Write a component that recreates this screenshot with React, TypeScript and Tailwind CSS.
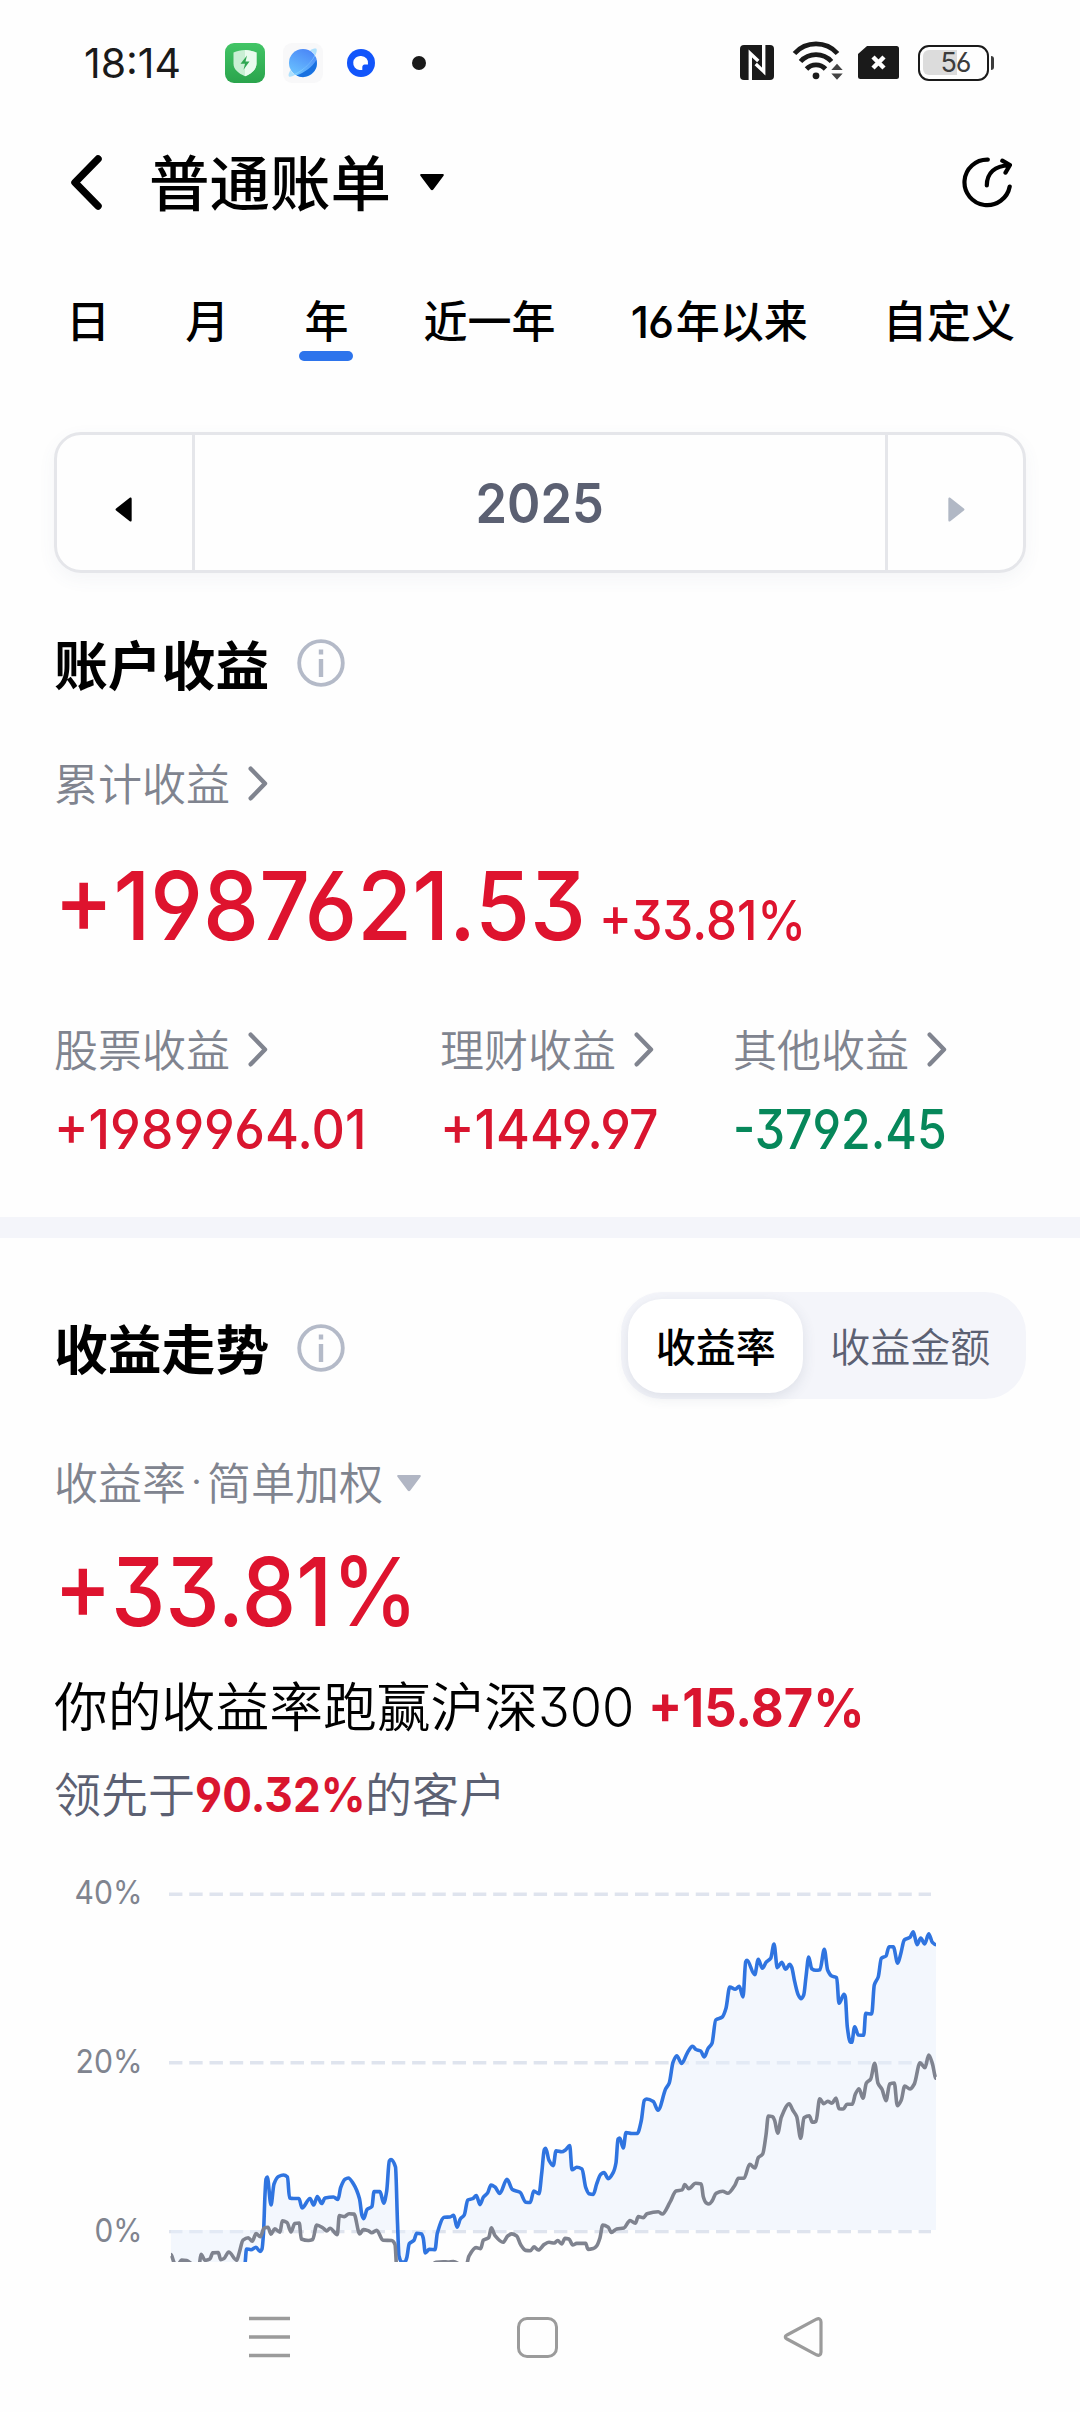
import { ReactNode } from "react";
import clsx from "clsx";

type Point = [number, number];

const tabs = ["日", "月", "年", "近一年", "16年以来", "自定义"];

const breakdown = [
  { label: "股票收益", value: "+1989964.01", color: "text-[#d9152f]", width: "w-[386px]", scale: "scale-x-[0.942]" },
  { label: "理财收益", value: "+1449.97", color: "text-[#d9152f]", width: "w-[293px]", scale: "scale-x-[0.94]" },
  { label: "其他收益", value: "-3792.45", color: "text-[#06875a]", width: "w-[240px]", scale: "scale-x-[0.875]" },
];

const accountLine: Point[] = [
  [171, 430], [236, 430], [245, 404], [246.5, 389], [251, 389.7], [256, 387.3], [260, 391.5], [262, 389], [263.5, 373], [265, 334.5],
  [266, 319], [267.3, 317], [271, 345], [274, 324], [278.5, 316.5], [283.5, 315], [287.5, 317], [289.5, 338], [293.5, 338.5],
  [299, 338.5], [302, 348], [310, 338.5], [313.7, 345], [317.3, 336.5], [321.7, 343.5], [325, 338], [333.5, 337], [338, 339.5],
  [340.7, 327.5], [345, 319.3], [348.3, 318], [353.5, 324], [359.5, 338.7], [362, 355.5], [363.7, 358.7], [367, 349.6],
  [372, 346.4], [374, 331.6], [380, 331.6], [383.7, 343.2], [386.7, 331], [389.3, 301], [391, 299.6], [395.5, 307],
  [397.5, 362.6], [399, 396], [401.7, 402], [405, 402], [406.7, 398], [409.3, 383.7], [414, 380.2], [416.7, 373.2],
  [421.7, 373.9], [423.3, 378.4], [425.3, 392.9], [429.3, 389.4], [435, 389.7], [437.3, 373.2], [444.3, 357.3], [450, 357],
  [453.7, 355.2], [457, 367.2], [460.3, 359], [464.3, 354.9], [467.7, 340], [472.7, 338.7], [476.3, 335.5], [480, 344.6],
  [483.3, 337.3], [487.7, 332.7], [491, 325], [495, 327], [499.7, 333.4], [507, 319.3], [512.3, 329.5], [520, 332.3],
  [525.7, 342.2], [530.3, 342.5], [533.7, 331], [539, 333.7], [541.7, 313.3], [544.3, 289.7], [545.7, 288.3], [549, 300.3],
  [553.3, 305.6], [556, 290.8], [561.7, 291.8], [565.7, 289.7], [569.7, 285.5], [572, 309.8], [576.7, 307.3], [582, 309],
  [585.7, 327.4], [589, 333.7], [593.3, 334.4], [596.7, 323.9], [600.7, 314.4], [604, 312.6], [608.3, 318.6], [613.3, 312.3],
  [616, 302.7], [618, 279.2], [619.7, 278], [623.3, 288], [626, 272.5], [631.7, 273.5], [637.3, 273.5], [641.3, 260.5],
  [644.3, 240.4], [646.7, 239], [653.3, 241.5], [658, 250.3], [665.7, 228.8], [669.3, 222.8], [673, 202.4], [676.7, 195.7],
  [681.7, 203.5], [687.3, 192.9], [692.5, 186.2], [696, 189.5], [700.7, 191], [704.3, 197], [708, 188.7], [712, 183.3],
  [715.7, 160], [722.3, 157], [726, 148.3], [729.7, 127], [735.3, 129.3], [739.3, 126.3], [743, 137], [745.7, 101.7],
  [747, 100.3], [754.7, 114.7], [758.3, 99.3], [762.3, 108.3], [766.3, 102], [770.7, 98.3], [774, 84], [777.3, 107.7],
  [781.7, 102.3], [785.7, 109.3], [789.7, 104.3], [791.7, 107.3], [794.7, 121.7], [798.3, 135], [801, 138.7], [803.7, 135],
  [806, 116.7], [808.7, 97], [811.7, 108.7], [815.7, 110.3], [820, 109.7], [824.3, 89.3], [827.7, 110.3], [831.7, 116],
  [836.7, 117.7], [839, 143.3], [844, 134.3], [845.3, 136.7], [847.3, 166.7], [850.3, 182.3], [851.7, 182.3], [854.7, 166.7],
  [858.3, 175], [863.7, 175.3], [865.7, 153.3], [871.7, 154], [874.3, 125], [878.3, 116.7], [881.3, 98.3], [886, 96],
  [889, 86.7], [893.3, 86.7], [897.7, 103.3], [900.7, 94], [904.3, 80], [910, 77.3], [913.3, 71.7], [917, 84.7],
  [920.7, 78], [924.7, 84], [928.7, 73.7], [932.3, 82.3], [936, 84.7],
];

const indexLine: Point[] = [
  [171, 394.6], [174, 402.4], [177, 406], [181.7, 400], [186.7, 400.6], [192, 404], [199, 406], [201, 394.3], [205, 400.3],
  [210, 398.9], [212.7, 392.9], [218.3, 392.5], [220.7, 399.6], [224, 398.5], [228.7, 392], [236.7, 400.3], [239.3, 392.5],
  [243, 380.2], [248.3, 377.7], [252.3, 381.3], [256, 373.5], [260.3, 376.7], [264, 368.2], [268, 367.2], [271, 374.2],
  [274.7, 368.9], [280, 372.1], [282.3, 360.8], [287, 362.6], [291, 372], [294.7, 363.6], [299.3, 363], [301.3, 379],
  [308.3, 380.5], [312.7, 379.5], [316.7, 365], [323.3, 368.2], [326.7, 371], [330, 368.2], [337.3, 374.6], [339.3, 355.6],
  [344.3, 356.6], [349, 353.8], [354, 354.1], [359.7, 373.9], [363.3, 369.6], [368.3, 370.7], [371.7, 372.8], [376.7, 370.3],
  [383, 380.2], [391.7, 380.5], [395, 384.4], [397, 412], [415, 425], [431, 406], [436, 402.2], [443.3, 401.8], [448, 402],
  [453.3, 401.5], [461, 405], [466, 406], [469, 396], [476, 387.6], [480.7, 388.6], [483.3, 380.2], [488.7, 377.7],
  [491.3, 367.9], [495, 375.6], [503, 382.3], [507.7, 376], [511.7, 373.9], [516.7, 376], [520.7, 384.8], [525.7, 390.4],
  [530.3, 390.8], [534, 386.9], [538.3, 390], [544.3, 384.4], [549, 382.3], [554.3, 383], [557.7, 380.5], [561.7, 384],
  [565, 378.4], [569, 379], [572.7, 385], [576.7, 383.4], [585.7, 383.4], [588, 389.4], [593.3, 388.6], [596.7, 385.8],
  [600, 377.7], [602.7, 365], [608.3, 367.2], [611.3, 372.5], [616.7, 368.9], [624, 367.9], [630, 360.5], [635.3, 363.3],
  [638.3, 356.6], [643.3, 357.7], [647, 353.8], [658.3, 351.7], [662.3, 354], [670, 342.2], [676, 331], [682.3, 329.9],
  [684.7, 324.5], [688.7, 328.7], [695.7, 323.3], [701.3, 324], [703.3, 336.7], [706, 342.7], [709, 344], [712.3, 340.7],
  [716, 333.3], [722.7, 331.3], [727.7, 333.3], [735, 325], [738.3, 318.3], [744, 318.3], [749.7, 304.3], [755, 308],
  [758.3, 297.7], [762.7, 294], [766, 275], [768.3, 256], [772.7, 256.7], [774.7, 260.7], [777.7, 273.3], [781.3, 257.3],
  [789.3, 243.7], [792.7, 250], [796.7, 256.7], [800.7, 278.3], [804, 257.7], [809.3, 255.7], [812.3, 262.3], [816, 261.3],
  [819.7, 238.7], [823.7, 243.7], [827.7, 241.3], [832, 243.3], [836, 238], [839, 248.7], [843.3, 249], [847, 244.3],
  [852.3, 244.3], [855.3, 234.3], [859, 228.7], [863, 238.3], [866.3, 223.3], [870.7, 219], [874.7, 203.3], [878, 223.3],
  [882, 229.3], [886, 240.7], [889.7, 224], [894.3, 223], [897.3, 245.7], [901.3, 240], [904.7, 226], [910, 229],
  [914.3, 224], [920, 202.7], [925, 207.7], [928.7, 195], [932.3, 203.3], [936, 218.3],
];

// Cubic interpolation that never overshoots a local peak
const smoothPath = (points: Point[]) => {
  const slope = (a: Point, b: Point) => (b[1] - a[1]) / (b[0] - a[0]);
  const tangents = points.map((p, i) => {
    if (i === 0 || i === points.length - 1) return 0;
    const s0 = slope(points[i - 1], p);
    const s1 = slope(p, points[i + 1]);
    return s0 * s1 <= 0 ? 0 : (2 * s0 * s1) / (s0 + s1);
  });
  return points.reduce((d, [x, y], i) => {
    if (i === 0) return `M${x} ${y}`;
    const [px, py] = points[i - 1];
    const h = (x - px) / 3;
    return `${d}C${px + h} ${py + tangents[i - 1] * h} ${x - h} ${y - tangents[i] * h} ${x} ${y}`;
  }, "");
};

// Figures with open six/nine and flat-top three, narrowed by the given scale class
const Num = ({ children, className, scale }: { children: ReactNode; className?: string; scale?: string }) => (
  <span className={clsx("inline-block whitespace-nowrap", className)}>
    <span className={clsx("inline-block origin-left font-[Inter,sans-serif] [font-feature-settings:'cv03','cv04','cv09']", scale)}>
      {children}
    </span>
  </span>
);

const ChevronRight = () => (
  <svg className="h-[35px] w-5" viewBox="0 0 20 35" fill="none" stroke="#80848f" strokeWidth="4.4" strokeLinecap="round" strokeLinejoin="round">
    <path d="M2.7 2.7 17 17.5 2.7 32.3" />
  </svg>
);

const CaretDown = ({ className }: { className?: string }) => (
  <svg className={clsx("h-[17px] w-6", className)} viewBox="0 0 24 17" fill="currentColor">
    <path d="M1.5 0h21c1.3 0 1.7 1 .9 2L13.3 15.5c-.8 1-1.8 1-2.6 0L.6 2C-.2 1 .2 0 1.5 0z" />
  </svg>
);

const InfoIcon = () => (
  <svg className="h-12 w-12" viewBox="0 0 48 48" fill="none" stroke="#b4bac8">
    <circle cx="24" cy="24" r="21.8" strokeWidth="3.8" />
    <path d="M24 10.5v5M24 20v18" strokeWidth="4.4" />
  </svg>
);

const StatusBar = () => (
  <div className="flex h-[125px] items-center pl-[84px] text-[#1a1a1a]">
    <Num className="w-[141px] text-[41px]">18:14</Num>
    <svg className="h-10 w-10" viewBox="0 0 40 40">
      <defs>
        <linearGradient id="guard" x1="0" y1="0" x2="0" y2="1">
          <stop offset="0" stopColor="#42c566" />
          <stop offset="1" stopColor="#2aa44c" />
        </linearGradient>
      </defs>
      <rect width="40" height="40" rx="9" fill="url(#guard)" />
      <path d="M20 7c4 .3 8 1.2 11.5 2.5V20.5c0 6-5 10-11.5 12.7C13.5 30.5 8.5 26.5 8.5 20.5V9.5C12 8.2 16 7.3 20 7z" fill="#c9efd4" />
      <path d="M20 7c4 .3 8 1.2 11.5 2.5V20.5c0 6-5 10-11.5 12.7z" fill="#e9fbee" />
      <path d="M22 12.5l-6.5 8.3H20l-1.5 6 6-8.3H20.5z" fill="#2ea751" />
    </svg>
    <svg className="ml-[18px] h-10 w-10" viewBox="0 0 40 40">
      <defs>
        <linearGradient id="planet" x1="0.7" y1="0" x2="0.2" y2="1">
          <stop offset="0" stopColor="#4a86f7" />
          <stop offset="1" stopColor="#6cc6ff" />
        </linearGradient>
      </defs>
      <rect width="40" height="40" rx="9" fill="#f8f8f9" />
      <circle cx="20" cy="20" r="14" fill="url(#planet)" />
      <path d="M33.5 17a14 14 0 0 1-20 15.5C22 29.5 29 24 33.5 17z" fill="#1971e0" />
      <path d="M27 7.5c3-2 6-2.5 6.5-1.5 1.5 3-3 11-10 17.5S8 35 6 33.5c-1-1-.3-3.5 1.5-6.5 1 2 2 3 3.5 4 5-2 10-5.5 14-9.5 3.5-3.5 6-7.5 6.5-10-1-2-2.5-3.2-4.5-4z" fill="#8ed6ff" opacity=".7" />
    </svg>
    <svg className="ml-6 h-7 w-7" viewBox="0 0 28 28">
      <circle cx="14" cy="14" r="14" fill="#1255fb" />
      <path d="M14 7a7 7 0 0 1 7 8.500h-3.500c-1.200.2-2 1-2.200 2.200V21H12.500A7 7 0 0 1 14 7z" fill="#fff" />
    </svg>
    <div className="ml-[37px] h-3.5 w-3.5 rounded-full bg-[#1a1a1a]" />

    <svg className="ml-[314px] h-[35px] w-[34px]" viewBox="0 0 34 35">
      <rect width="34" height="35" rx="4" fill="#1a1a1a" />
      <path d="M10.3 35V8.5l8 7.5M23.7 0v26.5l-8-7.5" stroke="#fff" strokeWidth="3.4" fill="none" />
    </svg>
    <svg className="mb-1 ml-[18px] h-[39px] w-[52px]" viewBox="0 0 52 39" fill="none" stroke="#1a1a1a" strokeWidth="4.8">
      <path d="M2.5 12.5a29 29 0 0 1 43 0" />
      <path d="M8.5 20.5a21 21 0 0 1 31 0" />
      <path d="M14.5 28a13 13 0 0 1 19 0" />
      <circle cx="24" cy="34.8" r="3.4" fill="#1a1a1a" stroke="none" />
      <path d="M45 22.7l5.7 6.3H39.3zM45 38.7l5.7-6.3H39.3z" fill="#444" stroke="none" />
    </svg>
    <svg className="ml-3.5 h-[33px] w-[41px]" viewBox="0 0 41 33">
      <path d="M9 0h29.500A2.500 2.500 0 0 1 41 2.500v28a2.500 2.500 0 0 1-2.500 2.500h-36A2.500 2.500 0 0 1 0 30.500V8z" fill="#1a1a1a" />
      <path d="M15 11l11 11M26 11l-11 11" stroke="#fff" strokeWidth="4.5" />
    </svg>
    <div className="ml-[19px] flex items-center">
      <div className="relative flex h-9 w-[71px] items-center justify-center rounded-[11px] border-[2.5px] border-[#1a1a1a]">
        <div className="absolute top-[3px] left-[3px] h-[25px] w-[34px] rounded-l-[6px] bg-[#dcdcdc]" />
        <span className="relative ml-1 font-[Inter,sans-serif] text-[27px] leading-none tracking-[-1px] text-[#3c3c3c] [font-feature-settings:'cv03']">
          56
        </span>
      </div>
      <div className="ml-[2px] h-3.5 w-[3px] rounded-r bg-[#3c3c3c]" />
    </div>
  </div>
);

const Header = () => (
  <div className="flex h-[115px] items-center pr-[68px] pl-[70px]">
    <svg className="h-[55px] w-8" viewBox="0 0 32 55" fill="none" stroke="#000" strokeWidth="7.5" strokeLinecap="round" strokeLinejoin="round">
      <path d="M28 4 5 27.5 28 51" />
    </svg>
    <h1 className="ml-[47px] pb-[6px] text-[60.5px] leading-[80px] font-medium">普通账单</h1>
    <CaretDown className="ml-[29px]" />
    <svg className="ml-auto h-[51px] w-[50px]" viewBox="0 0 50 51" fill="none" stroke="#000" strokeWidth="4.2" strokeLinecap="round" strokeLinejoin="round">
      <path d="M25.8 2.6A22.8 22.8 0 1 0 47.7 29.5" />
      <path d="M24.8 28.5C24.8 16 33 8.5 47 8.5M40.3 3.7 48 8l-4.5 7.6" />
    </svg>
  </div>
);

const Tabs = () => (
  <div className="flex h-[138px] justify-between pt-[46px] pr-[65px] pl-[66px] text-[44px] leading-[66px] font-medium">
    {tabs.map((tab) => (
      <div key={tab} className="relative">
        {tab.startsWith("16") ? (
          <>
            <Num className="w-[45px] text-[44px] leading-[66px] tracking-[-1px]">16</Num>
            {tab.slice(2)}
          </>
        ) : (
          tab
        )}
        {tab === "年" && <div className="absolute top-[65px] -left-[5px] h-2.5 w-[54px] rounded-full bg-[#2d74ec]" />}
      </div>
    ))}
  </div>
);

const YearPicker = () => (
  <div className="mx-[54px] mt-[54px] flex h-[141px] rounded-[27px] border-[3px] border-[#e5e6ea] shadow-[0_6px_18px_rgba(90,110,130,0.06)]">
    <div className="flex w-[135px] items-center justify-center pt-3.5 pr-0.5">
      <svg className="h-[25px] w-[17px]" viewBox="0 0 17 26">
        <path d="M17 2v22c0 1.500-1 2-2 1.200L.8 14c-.8-.6-.8-1.400 0-2L15 .8C16 0 17 .5 17 2z" />
      </svg>
    </div>
    <div className="flex flex-1 items-center justify-center border-x-[3px] border-[#e5e6ea] text-[#5b6072]">
      <span className="inline-block scale-x-[0.92] font-[Inter,sans-serif] text-[55px] leading-[80px] font-semibold">2025</span>
    </div>
    <div className="flex w-[135px] items-center justify-center pt-3.5 pl-0.5">
      <svg className="h-[25px] w-[17px]" viewBox="0 0 17 26" fill="#b1b8c5">
        <path d="M0 2v22c0 1.500 1 2 2 1.200L16.200 14c.8-.6.8-1.400 0-2L2 .8C1 0 0 .5 0 2z" />
      </svg>
    </div>
  </div>
);

const Earnings = () => (
  <section className="pl-[54px]">
    <div className="mt-[50px] flex h-[80px] items-center">
      <h2 className="text-[53.8px] leading-[80px] font-bold">账户收益</h2>
      <div className="ml-[28px]">
        <InfoIcon />
      </div>
    </div>
    <div className="mt-[46px] flex h-[66px] items-center text-[44px] leading-[66px] font-[350] text-[#80848f]">
      累计收益
      <div className="ml-[18px] pt-[3px]">
        <ChevronRight />
      </div>
    </div>
    <div className="mt-[17px] flex h-[134px] items-baseline text-[#de132e]">
      <Num className="w-[545px] text-[95.5px] leading-[134px] font-medium" scale="scale-x-[0.932]">
        +1987621.53
      </Num>
      <Num className="text-[55px] font-medium" scale="scale-x-[0.895]">
        +33.81%
      </Num>
    </div>
    <div className="mt-[49px] flex h-[202px]">
      {breakdown.map(({ label, value, color, width, scale }) => (
        <div key={label} className={width}>
          <div className="flex h-[66px] items-center text-[44px] leading-[66px] font-[350] text-[#80848f]">
            {label}
            <div className="ml-[18px] pt-[3px]">
              <ChevronRight />
            </div>
          </div>
          <Num className={clsx("text-[55px] leading-[88px] font-medium", color)} scale={scale}>
            {value}
          </Num>
        </div>
      ))}
    </div>
  </section>
);

const Trend = () => (
  <section className="pl-[54px]">
    <div className="flex h-[107px] items-center">
      <h2 className="pt-0.5 text-[53.8px] leading-[80px] font-bold">收益走势</h2>
      <div className="ml-[28px] pt-[5px]">
        <InfoIcon />
      </div>
      <div className="ml-[276px] flex h-[107px] w-[405px] items-center rounded-[41px] bg-[#f4f5fa] pl-[7px] text-[40px]">
        <div className="flex h-[94px] w-[175px] items-center justify-center rounded-[34px] bg-white pb-px font-medium shadow-[0_4px_14px_rgba(60,70,100,0.12)]">
          收益率
        </div>
        <div className="ml-[27px] pb-px font-[350] text-[#5b6072]">收益金额</div>
      </div>
    </div>
    <div className="mt-[49px] flex h-[66px] items-center text-[44px] leading-[66px] font-[350] text-[#80848f]">
      收益率
      <span className="w-[21px] text-center font-[Inter,sans-serif]">·</span>
      简单加权
      <CaretDown className="mt-[4px] ml-[14px] text-[#b1b6c4]" />
    </div>
    <div className="mt-[4px] h-[134px] text-[#de132e]">
      <Num className="text-[95.5px] leading-[134px] font-medium" scale="scale-x-[0.905]">
        +33.81%
      </Num>
    </div>
    <div className="mt-[11px] flex h-[80px] items-baseline text-[53.8px] leading-[80px] font-[350]">
      你的收益率跑赢沪深
      <Num className="w-[110px] text-[55px] font-light" scale="scale-x-[0.95]">
        300
      </Num>
      <Num className="text-[53px] font-bold text-[#d9152f]" scale="scale-x-[0.955]">
        +15.87%
      </Num>
    </div>
    <div className="mt-[14px] flex h-[70px] items-baseline text-[47px] leading-[70px] font-[350] text-[#5b6072]">
      领先于
      <Num className="w-[170px] text-[47.5px] font-bold text-[#d9152f]" scale="scale-x-[0.93]">
        90.32%
      </Num>
      的客户
    </div>
  </section>
);

const ReturnChart = () => {
  const account = smoothPath(accountLine);
  return (
    <svg className="block h-[402px] w-[1080px]" viewBox="0 0 1080 402">
      <g fill="#80848f" fontSize="33" textAnchor="end" fontFamily="Inter, sans-serif">
        <text x="142.500" y="44" textLength="68" lengthAdjust="spacingAndGlyphs">40%</text>
        <text x="142.500" y="213" textLength="67" lengthAdjust="spacingAndGlyphs">20%</text>
        <text x="142.500" y="382" textLength="48" lengthAdjust="spacingAndGlyphs">0%</text>
      </g>
      <g stroke="#dfe4ee" strokeWidth="3.4" strokeDasharray="13.4 6.86">
        <path d="M169 34.3h762M169 202.7h762M169 371.6h762" />
      </g>
      <path d={`${account}V370H171Z`} fill="#e8f0fb" opacity=".5" />
      <g fill="none" strokeWidth="3.6" strokeLinejoin="round">
        <path d={account} stroke="#2f74e0" />
        <path d={smoothPath(indexLine)} stroke="#7f838f" />
      </g>
    </svg>
  );
};

const NavBar = () => (
  <div className="flex h-[150px] items-center pl-[249px]">
    <svg className="h-[42px] w-[41px]" viewBox="0 0 41 42" stroke="#9b9b9b" strokeWidth="3.6">
      <path d="M0 2.5h41M0 21h41M0 39.5h41" />
    </svg>
    <div className="ml-[227px] h-[41px] w-[41px] rounded-[10px] border-[3px] border-[#9b9b9b]" />
    <svg className="ml-[225px] h-[42px] w-[41px]" viewBox="0 0 41 42" fill="none" stroke="#9b9b9b" strokeWidth="3.2">
      <path d="M38 6v30c0 3-2 4-4.500 2.800L4 23c-2.300-1.200-2.300-2.800 0-4L33.500 3.200C36 2 38 3 38 6z" />
    </svg>
  </div>
);

export default function App() {
  return (
    <div className="h-[2412px] w-[1080px] overflow-hidden bg-[#fefefe] font-['Noto_Sans_CJK_SC',sans-serif] text-black">
      <StatusBar />
      <Header />
      <Tabs />
      <YearPicker />
      <Earnings />
      <div className="mb-[54px] h-[21px] bg-[#f4f5fa]" />
      <Trend />
      <div className="mt-[33px]">
        <ReturnChart />
      </div>
      <NavBar />
    </div>
  );
}
